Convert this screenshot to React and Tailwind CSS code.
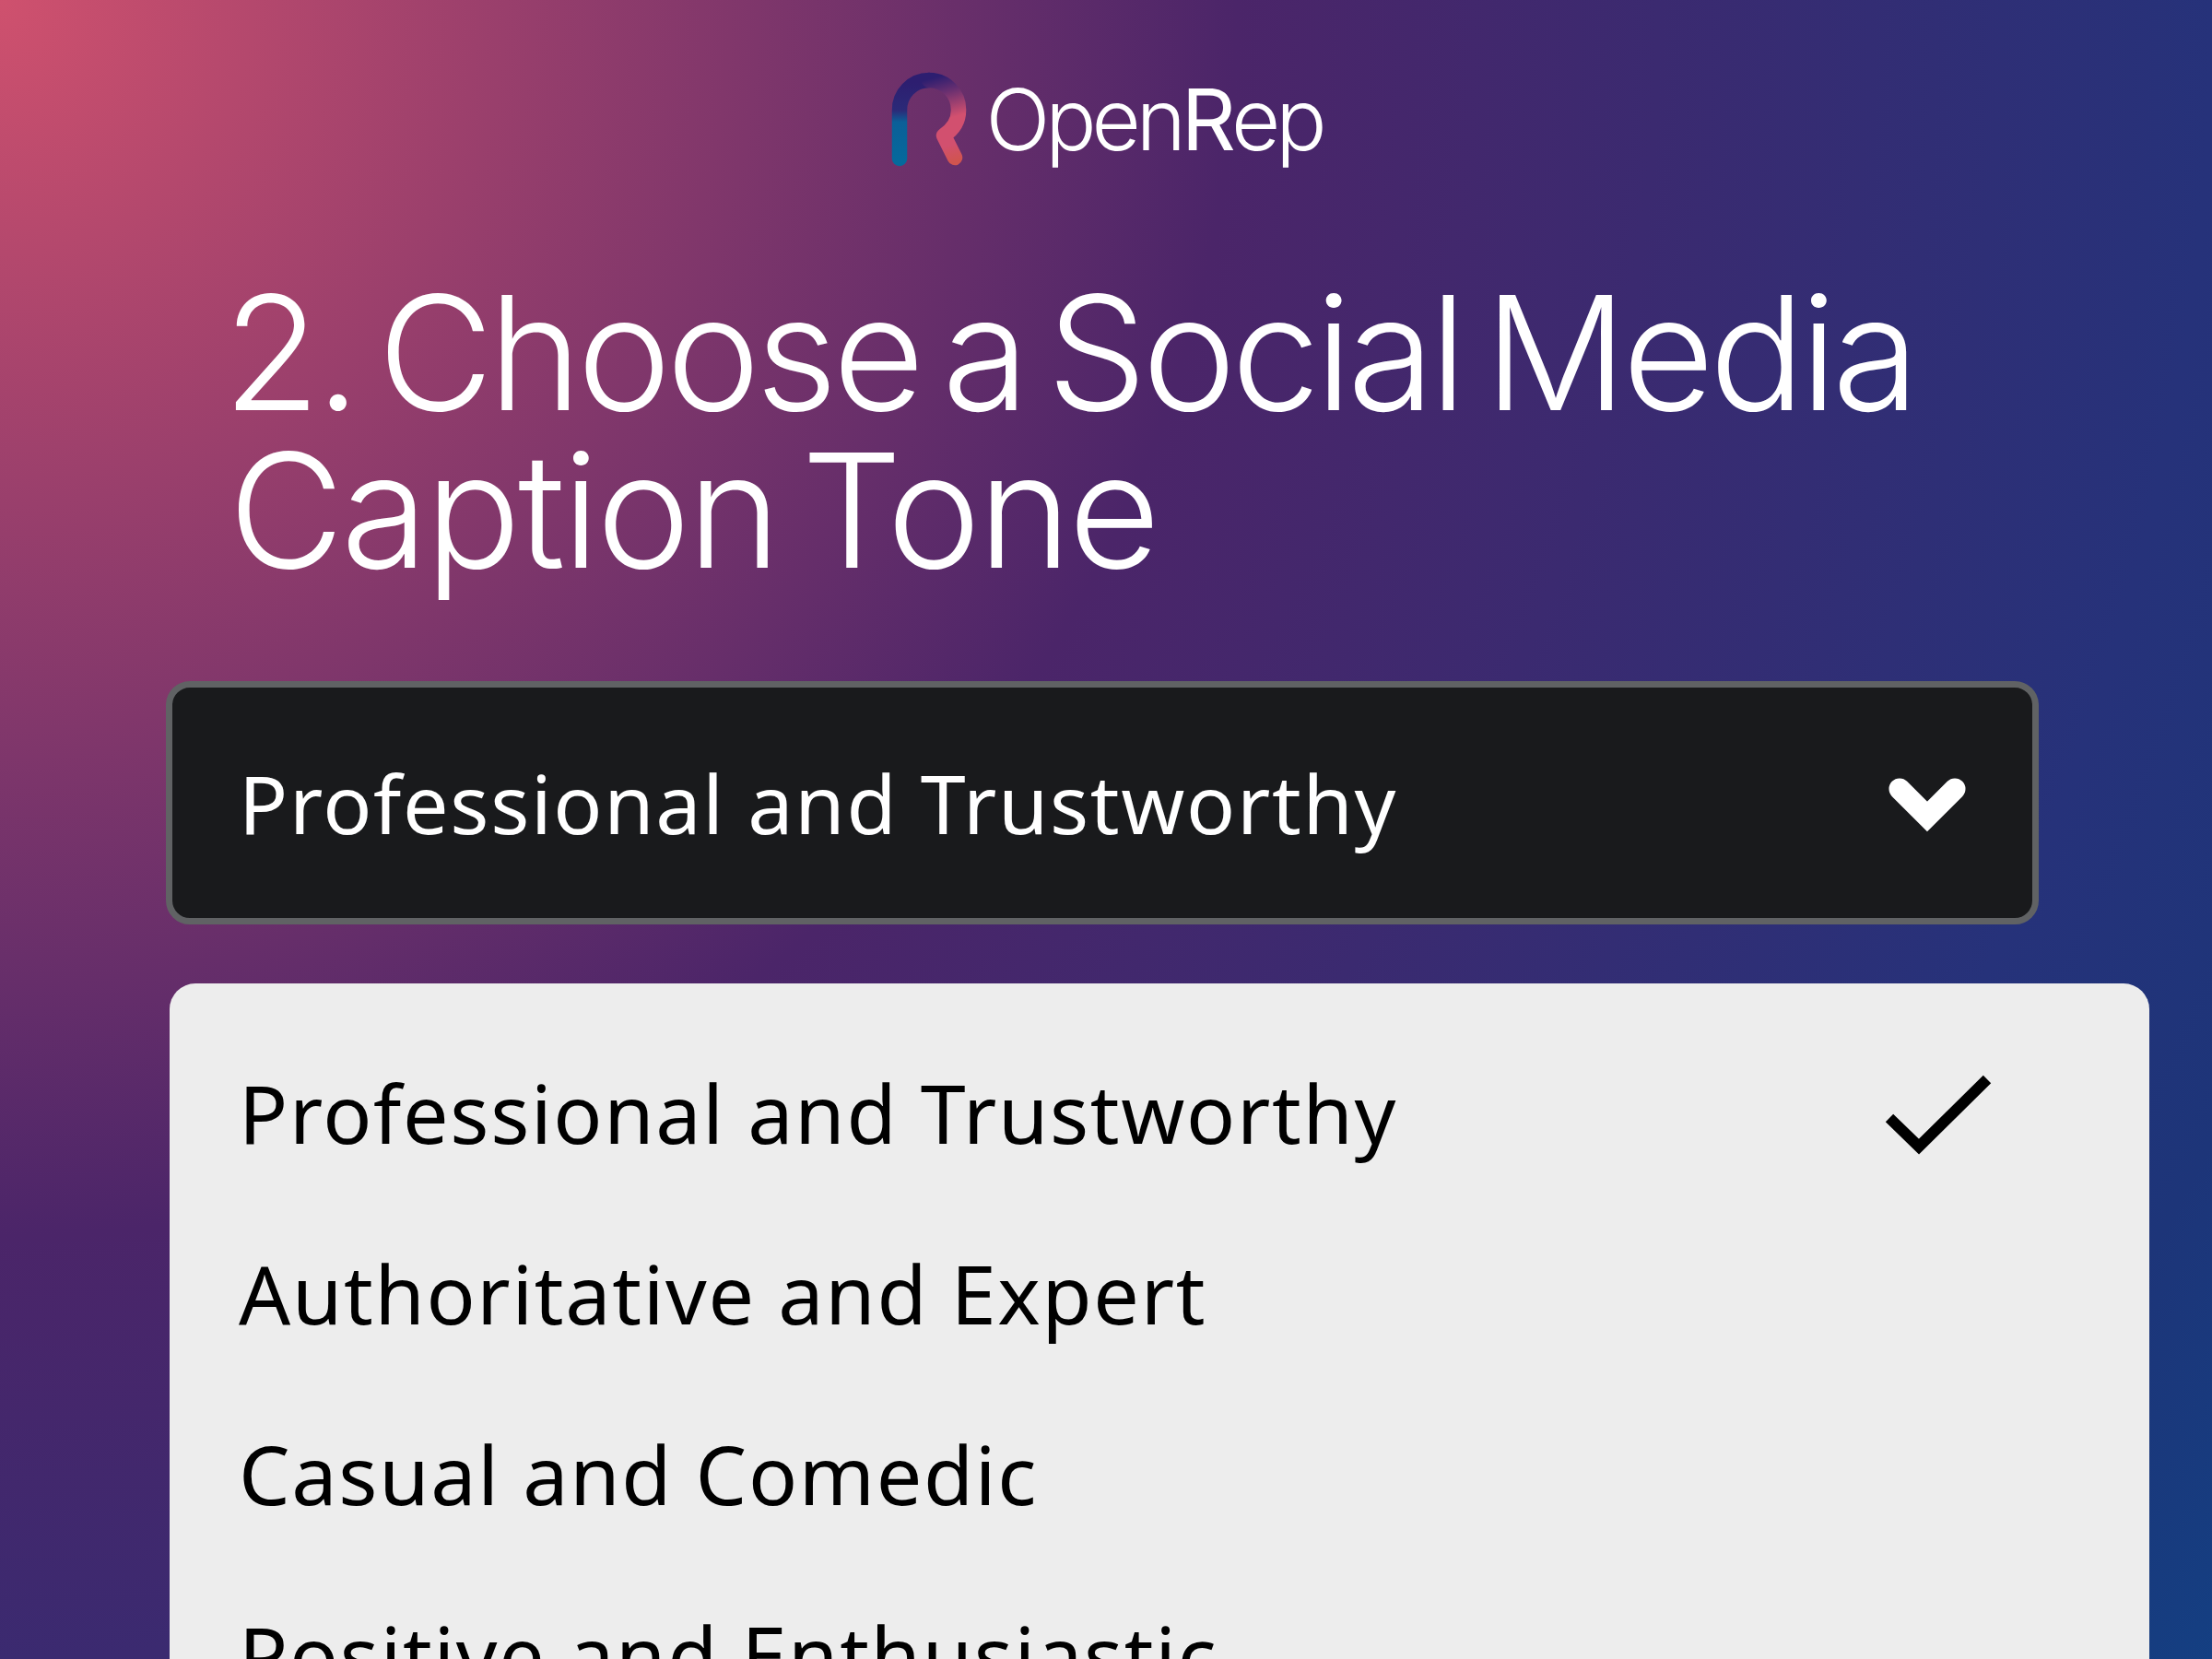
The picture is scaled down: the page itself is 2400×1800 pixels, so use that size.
const options = [
  { label: 'Professional and Trustworthy', selected: true },
  { label: 'Authoritative and Expert' },
  { label: 'Casual and Comedic' },
  { label: 'Positive and Enthusiastic' },
];

const Logo = () => (
  <div className="flex items-center justify-center pr-[4px] h-[116px]">
    <svg width="100" height="116" viewBox="40 24 100 116" fill="none" strokeWidth="16.5" strokeLinecap="round">
      <defs>
        <linearGradient id="stem" gradientUnits="userSpaceOnUse" x1="60" y1="40" x2="60" y2="125">
          <stop offset="0" stopColor="#2d1e70" />
          <stop offset="0.35" stopColor="#2b2a78" />
          <stop offset="0.5" stopColor="#0b5f98" />
          <stop offset="1" stopColor="#05699c" />
        </linearGradient>
        <linearGradient id="bend" gradientUnits="userSpaceOnUse" x1="90" y1="35" x2="115" y2="125">
          <stop offset="0" stopColor="#2d1e70" />
          <stop offset="0.2" stopColor="#6b3070" />
          <stop offset="0.5" stopColor="#d2506f" />
          <stop offset="0.8" stopColor="#d2506f" />
          <stop offset="1" stopColor="#d0544f" />
        </linearGradient>
      </defs>
      <path d="M55 122V70A32 32 0 0 1 87 37" stroke="url(#stem)" />
      <path d="M87 37A32 32 0 0 1 119 70C119 82 112 91 103 97L115 121" stroke="url(#bend)" strokeLinejoin="round" />
    </svg>
    <span className="ml-[8px] pb-[4px] font-['Inter',sans-serif] font-light text-[92px] leading-none tracking-[-0.055em] text-white">
      Open<span className="font-normal">R</span>ep
    </span>
  </div>
);

const App = () => (
  <div className="w-[2400px] h-[1800px] overflow-hidden pt-[74px] bg-[radial-gradient(circle_at_0_0,#cf516e_0%,#4b2569_44.7%,#3b2a70_60%,#26327a_80%,#1d3579_90%,#143f82_100%)]">
    <Logo />
    <h1 className="mt-[107px] ml-[242px] font-['Inter',sans-serif] font-[350] text-[172px] leading-[171px] text-white">
      <span className="block tracking-[-0.03em] [word-spacing:-19px]">2. Choose a Social Media</span>
      <span className="block pl-[6px] tracking-[-0.018em] [word-spacing:-20px]">Caption Tone</span>
    </h1>
    <div className="mt-[100px] ml-[180px] w-[2032px] h-[264px] flex items-center justify-between pl-[72px] pr-[70px] bg-[#191a1c] border-[7px] border-[#606264] rounded-[26px]">
      <span className="font-['Noto_Sans',sans-serif] text-[88px] leading-none tracking-[0.019em] text-white">Professional and Trustworthy</span>
      <svg className="mt-[3px]" width="88" height="62" viewBox="0 0 88 62" fill="none" stroke="white" strokeWidth="23" strokeLinecap="round" strokeLinejoin="miter">
        <path d="M14 14L44 44L74 14" />
      </svg>
    </div>
    <div className="mt-[64px] ml-[184px] w-[2148px] h-[900px] pt-[42px] pl-[75px] pr-[171px] bg-[#ededed] rounded-[28px]">
      {options.map((o) => (
        <div key={o.label} className="h-[196px] flex items-center justify-between">
          <span className="font-['Noto_Sans',sans-serif] text-[88px] leading-none tracking-[0.019em] text-black">{o.label}</span>
          {o.selected && (
            <svg className="mt-[9px]" width="116" height="92" viewBox="0 0 116 92" fill="none" stroke="black" strokeWidth="12" strokeLinecap="butt" strokeLinejoin="miter">
              <path d="M5 47L37 78L111 5" />
            </svg>
          )}
        </div>
      ))}
    </div>
  </div>
);

export default App;
